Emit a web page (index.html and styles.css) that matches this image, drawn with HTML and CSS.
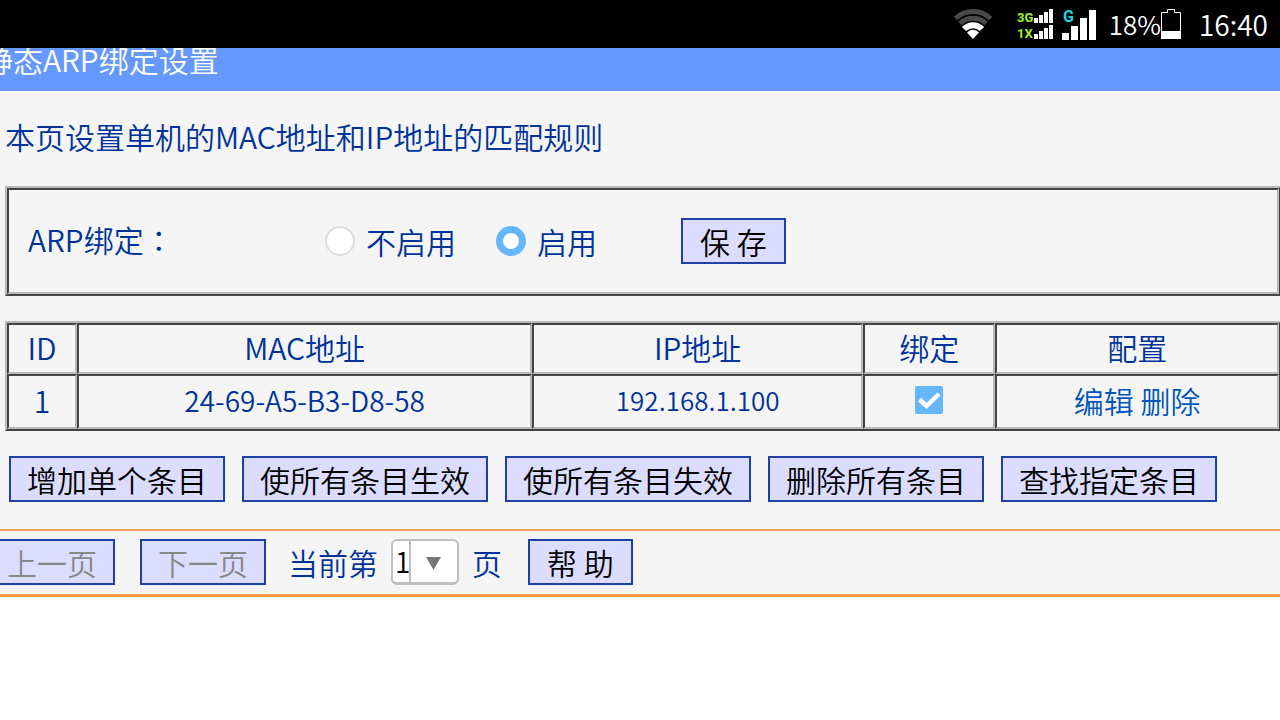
FILE: index.html
```html
<!DOCTYPE html>
<html lang="zh-CN">
  <head>
    <meta charset="UTF-8">
    <meta name="viewport" content="width=device-width, initial-scale=1.0">
    <title>静态ARP绑定设置</title>
    <link rel="stylesheet" href="styles.css">
  </head>
  <body>
    <div class="status-bar">
      <svg class="wifi" width="38" height="30" viewBox="0 0 38 30">
        <g fill="none" stroke="#4a4a4a">
          <path d="M1.500 9.500A25.500 25.500 0 0 1 36.500 9.500" stroke-width="5"/>
          <path d="M6 14.500A19 19 0 0 1 32 14.500" stroke-width="5"/>
        </g>
        <path d="M10 20A12.500 12.500 0 0 1 28 20" fill="none" stroke="#fff" stroke-width="6"/>
        <path d="M13 23.500A8 8 0 0 1 25 23.500L19 30Z" fill="#fff"/>
      </svg>
      <svg class="signal" width="80" height="32" viewBox="0 0 80 32">
        <text class="net" x="0" y="14">3G</text>
        <text class="net" x="0" y="30">1X</text>
        <path fill="#fff" d="M17 10h4v5h-4z M22 7h4v8h-4z M27 4h4v11h-4z M32 1h4v14h-4z"/>
        <path fill="#fff" d="M17 26h4v5h-4z M22 23h4v8h-4z M27 20h4v11h-4z M32 17h4v14h-4z"/>
        <text class="net-g" x="46" y="14">G</text>
        <path fill="#fff" d="M45 25h7v7h-7z M54 18h7v14h-7z M63 10h7v22h-7z M72 2h7v30h-7z"/>
      </svg>
      <span class="percent">18%</span>
      <svg width="20" height="30" viewBox="0 0 20 30">
        <path d="M.5 29.5V3.500H6.500V.5H13.500V3.500H19.500V29.500Z" fill="none" stroke="#fff"/>
        <path d="M0 22H20V30H0Z" fill="#fff"/>
      </svg>
      <span class="clock">16:40</span>
    </div>

    <h1 class="title">静态ARP绑定设置</h1>

    <form class="content">
      <p class="intro">本页设置单机的MAC地址和IP地址的匹配规则</p>

      <div class="frame">
        <div class="setting">
          <span class="setting-name">ARP绑定<span class="colon" lang="zh-TW">：</span></span>
          <label class="choice"><input type="radio" name="arp">不启用</label>
          <label class="choice"><input type="radio" name="arp" checked>启用</label>
          <button type="button" class="btn short save">保 存</button>
        </div>
      </div>

      <table class="list">
        <colgroup>
          <col class="col-id"><col class="col-mac"><col class="col-ip"><col class="col-bind"><col class="col-edit">
        </colgroup>
        <tr>
          <th>ID</th>
          <th>MAC地址</th>
          <th>IP地址</th>
          <th>绑定</th>
          <th>配置</th>
        </tr>
        <tr class="entry">
          <td>1</td>
          <td class="mac">24-69-A5-B3-D8-58</td>
          <td class="ip">192.168.1.100</td>
          <td><input type="checkbox" aria-label="绑定" checked></td>
          <td><a href="#">编辑</a> <a href="#">删除</a></td>
        </tr>
      </table>

      <div class="actions">
        <button type="button" class="btn">增加单个条目</button>
        <button type="button" class="btn">使所有条目生效</button>
        <button type="button" class="btn">使所有条目失效</button>
        <button type="button" class="btn">删除所有条目</button>
        <button type="button" class="btn">查找指定条目</button>
      </div>

      <div class="pager">
        <button type="button" class="btn prev" disabled>上一页</button>
        <button type="button" class="btn next" disabled>下一页</button>
        <label for="page">当前第</label>
        <select id="page"><option>1</option></select>
        <span>页</span>
        <button type="button" class="btn short help">帮 助</button>
      </div>
    </form>
  </body>
</html>
```
FILE: styles.css
```css
* {
  box-sizing: border-box;
}

body {
  margin: 0;
  background-color: #fff;
  color: #003399;
  font-family: "Noto Sans CJK SC", sans-serif;
  font-size: 30px;
  font-weight: 350;
  line-height: 40px;
  overflow: hidden;
}

/* phone status bar */
.status-bar {
  display: flex;
  justify-content: flex-end;
  align-items: center;
  height: 48px;
  padding-right: 12px;
  background-color: #000;
  color: #fff;
  font-size: 28px;
}

.wifi {
  margin-right: 25px;
}

.signal {
  margin-right: 12px;
}

.percent {
  font-size: 26px;
}

.clock {
  margin-left: 18px;
}

.net,
.net-g {
  font-family: Roboto, sans-serif;
  font-size: 13px;
  font-weight: 700;
  fill: #a6f01e;
}

.net-g {
  font-size: 16px;
  fill: #1fd0e0;
}

.title {
  height: 43px;
  margin: 0;
  background-color: #6699ff;
  color: #fff;
  font-size: 30px;
  font-weight: 350;
  line-height: 22px;
  text-indent: -17px;
  white-space: nowrap;
  overflow: hidden;
}

.content {
  background-color: #f5f5f5;
  white-space: nowrap;
  overflow: hidden;
}

.intro {
  margin: 0;
  padding: 25px 5px 30px;
}

.frame,
.list {
  margin: 0 -1px 0 5px;
  border: 2px solid;
  border-color: #b8b8b8 #444 #444 #b8b8b8;
}

.setting,
.list th,
.list td {
  border: 2px solid;
  border-color: #444 #b8b8b8 #b8b8b8 #444;
}

.setting {
  display: flex;
  align-items: center;
  height: 106px;
  padding-left: 19px;
}

.setting-name {
  width: 297px;
  padding-bottom: 4px;
}

.colon {
  font-family: "Noto Sans CJK TC", sans-serif;
}

.choice {
  display: flex;
  align-items: center;
  gap: 11px;
  margin-right: 40px;
}

.save {
  margin-left: 44px;
}

.list {
  width: calc(100% - 4px);
  margin-top: 25px;
  border-collapse: separate;
  border-spacing: 0;
  table-layout: fixed;
  text-align: center;
}

.list th,
.list td {
  height: 51px;
  padding: 0 0 4px;
  font-weight: 350;
}

.list .entry td {
  height: 55px;
}

.list .mac {
  font-size: 28px;
}

.list .ip {
  font-size: 26px;
}

.col-id { width: 5.5%; }
.col-mac { width: 35.8%; }
.col-ip { width: 26%; }
.col-bind { width: 10.4%; }

a {
  color: #0055bb;
  text-decoration: none;
}

input {
  appearance: none;
  margin: 0;
}

input[type="radio"] {
  width: 30px;
  height: 30px;
  border: 2px solid #ddd;
  border-radius: 50%;
  background-color: #fff;
}

input[type="radio"]:checked {
  border: 7px solid #66b6fc;
}

input[type="checkbox"] {
  display: block;
  width: 28px;
  height: 28px;
  margin: 0 auto;
  border-radius: 2px;
  background: #66b6fc url("data:image/svg+xml,%3Csvg xmlns='http://www.w3.org/2000/svg' viewBox='0 0 28 28'%3E%3Cpath d='M4.500 13.500 11.500 20 24 8' fill='none' stroke='white' stroke-width='4.500'/%3E%3C/svg%3E");
}

.btn {
  height: 46px;
  padding: 0 16px;
  border: 2px solid #1f40a5;
  background-color: #dcdcff;
  color: #000;
  font: inherit;
  line-height: 40px;
  white-space: nowrap;
}

.btn:disabled {
  color: #888;
}

.short {
  padding: 0 17px;
}

.actions {
  display: flex;
  gap: 17px;
  padding: 25px 9px 27px;
}

.pager {
  display: flex;
  align-items: center;
  height: 68px;
  padding-bottom: 2px;
  border-top: 2px solid #e5a35a;
  border-bottom: 3px solid #fa9a48;
}

.prev {
  margin-left: -11px;
}

.next {
  margin: 0 22px 0 25px;
}

.help {
  margin-left: 26px;
}

select {
  appearance: none;
  width: 68px;
  height: 46px;
  margin: 0 13px;
  padding: 0 0 0 2px;
  border: 2px solid #c0c0c0;
  border-bottom-width: 3px;
  border-radius: 6px;
  background: #fff url("data:image/svg+xml,%3Csvg xmlns='http://www.w3.org/2000/svg' width='48' height='42'%3E%3Cpath d='M1 0V42' stroke='%23c0c0c0' stroke-width='2'/%3E%3Cpath d='M17 16H32L24.500 29Z' fill='%23777'/%3E%3C/svg%3E") right top no-repeat;
  color: #000;
  font: inherit;
  font-size: 28px;
}
```
